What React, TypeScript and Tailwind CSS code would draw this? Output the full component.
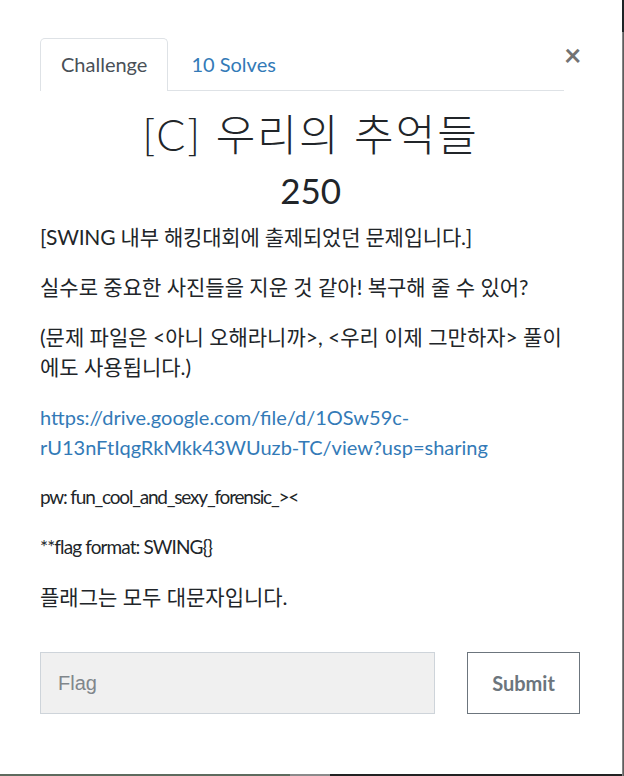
import React from "react";

const font = { fontFamily: 'Lato, "Noto Sans CJK KR", sans-serif' };

export default function App() {
  return (
    <div className="w-[624px] h-[776px] flex bg-white overflow-hidden" style={font}>
      <div className="flex-1 flex flex-col">
        <div className="flex-1 flex flex-col pl-[40px] pr-[41px] pt-[38px]">
          <div className="flex items-start">
            <div className="flex w-[524px] border-b border-[#dee2e6]">
              <div className="px-[20px] py-[10px] text-[20px] leading-[30px] text-[#495057] border border-b-0 border-[#dee2e6] rounded-t-[5px] bg-white -mb-px">
                Challenge
              </div>
              <div className="px-[22px] py-[10px] text-[20px] leading-[30px] text-[#337ab7] border border-transparent">
                10 Solves
              </div>
            </div>
            <div className="flex-1 flex justify-end pt-[1px]">
              <span className="text-[30px] leading-[30px] text-[#737373] font-bold">×</span>
            </div>
          </div>

          <h2 className="mt-[20px] text-center text-[43px] leading-[48px] text-[#212529] font-light tracking-[2px]">
            [C] 우리의 추억들
          </h2>
          <h3 className="mt-[10px] text-center text-[35px] leading-[42px] text-[#212529] font-normal">
            250
          </h3>

          <div className="mt-[11px] text-[20px] leading-[30px] text-[#212529] flex flex-col gap-[20px]">
            <p className="text-[21px] tracking-[-0.2px]">[SWING 내부 해킹대회에 출제되었던 문제입니다.]</p>
            <p className="text-[21px]">실수로 중요한 사진들을 지운 것 같아! 복구해 줄 수 있어?</p>
            <p className="text-[21px]">
              (문제 파일은 &lt;아니 오해라니까&gt;, &lt;우리 이제 그만하자&gt; 풀이
              <br />
              에도 사용됩니다.)
            </p>
            <p>
              <a className="text-[#337ab7]">
                https://drive.google.com/file/d/1OSw59c-rU13nFtIqgRkMkk43WUuzb-TC/view?usp=sharing
              </a>
            </p>
            <p className="text-[19px] tracking-[-1.2px]">pw: fun_cool_and_sexy_forensic_&gt;&lt;</p>
            <p className="text-[19px] tracking-[-0.9px]">**flag format: SWING{"{}"}</p>
            <p className="text-[21px]">플래그는 모두 대문자입니다.</p>
          </div>

          <div className="mt-[40px] flex items-stretch">
            <div
              className="w-[395px] h-[62px] bg-[#f0f0f0] border border-[#ced4da] flex items-center px-[17px] text-[20px] text-[#80868b]"
              style={{ fontFamily: '"Liberation Sans", Arial, sans-serif' }}
            >
              Flag
            </div>
            <div className="ml-[32px] w-[113px] h-[62px] border border-[#6c757d] bg-white flex items-center justify-center text-[20px] font-bold text-[#6c757d]">
              Submit
            </div>
          </div>
        </div>
        <div className="h-[2px] flex">
          <div className="w-[290px] bg-[#5e6b5e]" />
          <div className="w-[40px] bg-[#8a8a8a]" />
          <div className="flex-1 bg-[#222]" />
        </div>
      </div>
      <div className="w-[3px] flex flex-col">
        <div className="h-[32px] bg-[#1e2426]" />
        <div className="flex-1 bg-gradient-to-r from-[#9a9a9a] to-[#4a4a4a]" />
      </div>
    </div>
  );
}
